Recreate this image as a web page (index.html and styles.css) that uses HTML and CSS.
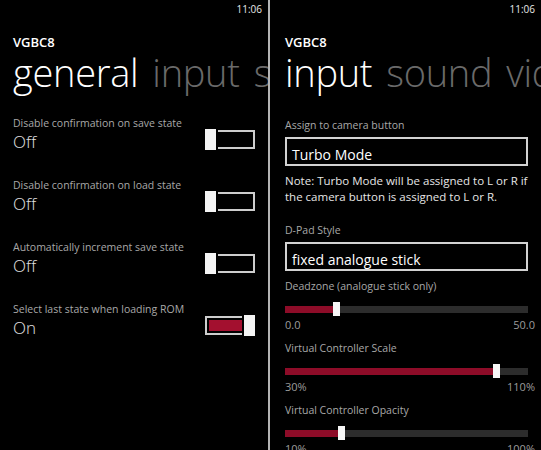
FILE: index.html
```html
<!DOCTYPE html>
<html lang="en">
<head>
<meta charset="utf-8">
<title>VGBC8 settings</title>
<link rel="stylesheet" href="styles.css">
</head>
<body>
<div class="screen">
  <section class="panel panel-left">
    <div class="status">11:06</div>
    <div class="app-title">VGBC8</div>
    <div class="pivot"><span class="pivot-current">general</span><span class="pivot-next">input</span><span class="pivot-next">sound</span></div>
    <div class="toggles">
      <div class="toggle-item">
        <div class="toggle-text"><div class="label">Disable confirmation on save state</div><div class="value">Off</div></div>
        <div class="switch"><span class="switch-fill"></span><span class="thumb"></span></div>
      </div>
      <div class="toggle-item">
        <div class="toggle-text"><div class="label">Disable confirmation on load state</div><div class="value">Off</div></div>
        <div class="switch"><span class="switch-fill"></span><span class="thumb"></span></div>
      </div>
      <div class="toggle-item">
        <div class="toggle-text"><div class="label">Automatically increment save state</div><div class="value">Off</div></div>
        <div class="switch"><span class="switch-fill"></span><span class="thumb"></span></div>
      </div>
      <div class="toggle-item">
        <div class="toggle-text"><div class="label">Select last state when loading ROM</div><div class="value">On</div></div>
        <div class="switch switch-on"><span class="switch-fill"></span><span class="thumb"></span></div>
      </div>
    </div>
  </section>
  <div class="divider"></div>
  <section class="panel panel-right">
    <div class="status">11:06</div>
    <div class="app-title">VGBC8</div>
    <div class="pivot"><span class="pivot-current">input</span><span class="pivot-next">sound</span><span class="pivot-next">video</span></div>
    <div class="form">
      <div class="label">Assign to camera button</div>
      <div class="picker">Turbo Mode</div>
      <p class="note">Note: Turbo Mode will be assigned to L or R if the camera button is assigned to L or R.</p>
      <div class="label label-gap">D-Pad Style</div>
      <div class="picker">fixed analogue stick</div>
      <div class="slider-group slider-first">
        <div class="label">Deadzone (analogue stick only)</div>
        <div class="slider"><div class="slider-track"><div class="slider-fill" style="width:21%"></div></div><span class="slider-thumb" style="left:21%"></span></div>
        <div class="range"><span>0.0</span><span>50.0</span></div>
      </div>
      <div class="slider-group">
        <div class="label">Virtual Controller Scale</div>
        <div class="slider"><div class="slider-track"><div class="slider-fill" style="width:86.8%"></div></div><span class="slider-thumb" style="left:86.8%"></span></div>
        <div class="range"><span>30%</span><span>110%</span></div>
      </div>
      <div class="slider-group">
        <div class="label">Virtual Controller Opacity</div>
        <div class="slider"><div class="slider-track"><div class="slider-fill" style="width:23%"></div></div><span class="slider-thumb" style="left:23%"></span></div>
        <div class="range"><span>10%</span><span>100%</span></div>
      </div>
    </div>
  </section>
</div>
</body>
</html>
```

FILE: styles.css
```css
* { box-sizing: border-box; }

html, body {
  margin: 0;
  padding: 0;
  background: #000;
}

body {
  font-family: "Open Sans", "Noto Sans", sans-serif;
  color: #fff;
  width: 541px;
  height: 450px;
  overflow: hidden;
}

.screen {
  display: flex;
  height: 450px;
}

.panel {
  overflow: hidden;
  display: flex;
  flex-direction: column;
  min-width: 0;
}

.panel-left {
  width: 268px;
  flex: none;
  padding: 0 13px;
}

.panel-right {
  flex: 1;
  padding: 0 13px 0 15px;
}

.divider {
  width: 2px;
  flex: none;
  background: #b4b4b4;
}

.status {
  margin: 3px -7px 0 0;
  font-size: 10px;
  line-height: 12px;
  text-align: right;
  color: #e8e8e8;
}

.app-title {
  margin-top: 19px;
  font-size: 13px;
  line-height: 16px;
  font-weight: 600;
}

.pivot {
  display: flex;
  gap: 14px;
  white-space: nowrap;
  font-size: 38px;
  line-height: 44px;
  font-weight: 300;
  letter-spacing: -0.3px;
}

.pivot-current { color: #fff; }
.pivot-next { color: #6a6a6a; }

.label {
  font-size: 10.5px;
  line-height: 14px;
  color: #a8a8a8;
  white-space: nowrap;
}

/* left: toggles */
.toggles {
  margin-top: 22px;
  display: flex;
  flex-direction: column;
  gap: 25px;
}

.toggle-item {
  display: flex;
  justify-content: space-between;
  align-items: flex-start;
}

.value {
  margin-top: 1px;
  font-size: 17px;
  line-height: 22px;
  font-weight: 300;
  color: #e2e2e2;
}

.switch {
  position: relative;
  width: 50px;
  height: 19px;
  margin-top: 14px;
  border: 2px solid #cdcdcd;
  padding: 2px;
  display: flex;
}

.switch-fill {
  flex: 1;
}

.switch-on .switch-fill {
  background: #a3102f;
}

.thumb {
  position: absolute;
  top: -3px;
  left: -2px;
  width: 11px;
  height: 21px;
  background: #f4f4f4;
  box-shadow: 0 0 0 2px #000;
}

.switch-on .thumb {
  left: auto;
  right: -2px;
}

/* right: form */
.form {
  margin-top: 24px;
  display: flex;
  flex-direction: column;
}

.picker {
  margin-top: 5px;
  height: 29px;
  border: 2px solid #d2d2d2;
  padding: 7px 5px 0;
  font-size: 14px;
  line-height: 18px;
  color: #fff;
  white-space: nowrap;
}

.note {
  margin: 7px 0 0;
  font-size: 11.5px;
  line-height: 16px;
  color: #e6e6e6;
}

.label-gap {
  margin-top: 18px;
}

.slider-group {
  margin-top: 9px;
}

.slider-first {
  margin-top: 8px;
}

.slider {
  position: relative;
  margin-top: 9px;
  height: 14px;
  display: flex;
  align-items: center;
}

.slider-track {
  flex: 1;
  height: 7px;
  background: #2c2c2c;
}

.slider-fill {
  height: 100%;
  background: #8d0c28;
}

.slider-thumb {
  position: absolute;
  top: 0;
  width: 7px;
  height: 14px;
  margin-left: -3px;
  background: #f6f6f6;
}

.range {
  margin: 2px -7px 0 0;
  display: flex;
  justify-content: space-between;
  font-size: 11px;
  line-height: 14px;
  color: #9c9c9c;
}
```
